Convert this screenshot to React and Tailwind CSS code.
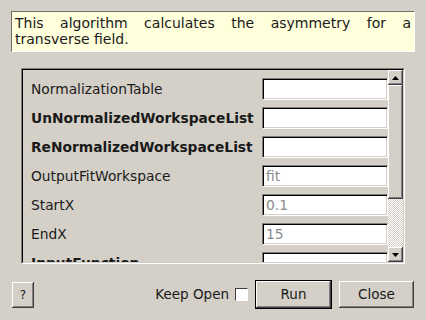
import React from "react";

const raised =
  "bg-[#d4d0c8] shadow-[inset_-1px_-1px_0_#404040,inset_1px_1px_0_#ffffff,inset_-2px_-2px_0_#808080]";

function Field({ label, bold, placeholder }) {
  return (
    <div className="flex items-center h-[22px] shrink-0">
      <div className={`w-[231px] whitespace-nowrap ${bold ? "font-bold" : ""}`}>{label}</div>
      <div className="flex-1 h-[22px] border border-t-[#808080] border-l-[#808080] border-b-white border-r-white bg-white shadow-[inset_1px_1px_0_#000,inset_-1px_-1px_0_#d4d0c8] pl-[3px] flex items-center text-[#8a8a8a]">
        {placeholder}
      </div>
    </div>
  );
}

function Arrow({ down }) {
  return (
    <svg width="7" height="4" viewBox="0 0 7 4">
      {down ? <polygon points="0,0 7,0 3.5,4" fill="#000" /> : <polygon points="0,4 7,4 3.5,0" fill="#000" />}
    </svg>
  );
}

function ScrollBar() {
  return (
    <div className="w-[15px] flex flex-col">
      <div className={`h-[15px] flex items-center justify-center ${raised}`}>
        <Arrow />
      </div>
      <div className={`h-[114px] ${raised}`}></div>
      <div className="flex-1 bg-[repeating-conic-gradient(#ffffff_0_25%,#d4d0c8_0_50%)] bg-[length:2px_2px]"></div>
      <div className={`h-[15px] flex items-center justify-center ${raised}`}>
        <Arrow down />
      </div>
    </div>
  );
}

export default function App() {
  const fields = [
    { label: "NormalizationTable" },
    { label: "UnNormalizedWorkspaceList", bold: true },
    { label: "ReNormalizedWorkspaceList", bold: true },
    { label: "OutputFitWorkspace", placeholder: "fit" },
    { label: "StartX", placeholder: "0.1" },
    { label: "EndX", placeholder: "15" },
    { label: "InputFunction", bold: true },
    { label: "Fitting" },
  ];

  return (
    <div className="w-[426px] h-[320px] bg-[#d4d0c8] font-['DejaVu_Sans',sans-serif] text-[14px] text-[#1a1a1a] pt-[11px] flex flex-col">
      <div className="mx-[11px] h-[41px] bg-[#ffffdc] border border-t-[#6d6d6d] border-l-[#6d6d6d] border-b-white border-r-white px-[3px] pt-[3px] leading-[16px] text-justify">
        This algorithm calculates the asymmetry for a transverse field.
      </div>

      <div className="ml-[21px] mt-[16px] w-[384px] h-[196px] border border-t-[#808080] border-l-[#808080] border-b-white border-r-white">
        <div className="h-full border border-t-black border-l-black border-b-[#d4d0c8] border-r-[#d4d0c8] flex">
          <div className="flex-1 overflow-hidden flex flex-col gap-[7px] pt-[8px] pl-[8px] text-[13.8px]">
            {fields.map((f) => (
              <Field key={f.label} {...f} />
            ))}
          </div>
          <ScrollBar />
        </div>
      </div>

      <div className="mt-[16px] px-[12px] flex items-center h-[29px] text-[13.5px]">
        <div className={`w-[22px] h-[26px] flex items-center justify-center text-[12px] ${raised}`}>?</div>
        <div className="flex-1"></div>
        <span>Keep Open</span>
        <div className="ml-[6px] w-[13px] h-[13px] bg-white border border-t-[#404040] border-l-[#404040] border-b-white border-r-white"></div>
        <div className="ml-[7px] w-[77px] h-[29px] border border-black">
          <div className={`h-full flex items-center justify-center ${raised}`}>Run</div>
        </div>
        <div className={`ml-[7px] w-[75px] h-[27px] flex items-center justify-center ${raised}`}>Close</div>
      </div>
    </div>
  );
}
